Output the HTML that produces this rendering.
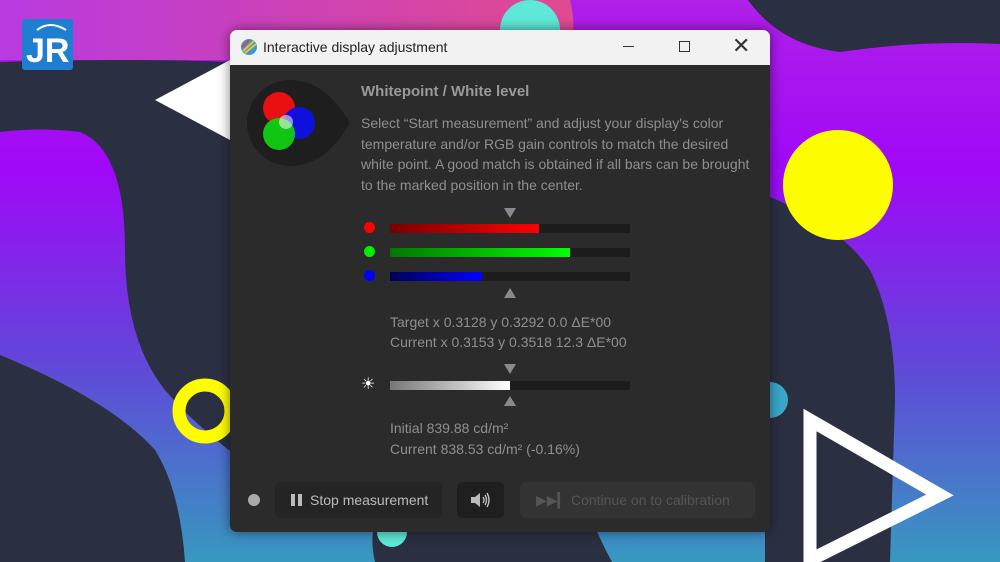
<!DOCTYPE html>
<html><head><meta charset="utf-8"><style>
body{margin:0;width:1000px;height:562px;overflow:hidden;background:#2a2f42;font-family:"Liberation Sans",sans-serif;position:relative}
.win{position:absolute;left:230px;top:30px;width:540px;height:502px;background:#2b2b2b;border-radius:7px;overflow:hidden;box-shadow:0 0 12px rgba(0,0,0,.5)}
.tb{height:35px;background:#f2f2f2;position:relative;font-size:14px;color:#222}
.t{position:absolute;font-size:14px;color:#8f8f8f}
.bar{position:absolute;left:160px;width:240px;height:9px;background:#1c1c1c}
.bar div{height:100%}
.dot{position:absolute;left:134px;width:11px;height:11px;border-radius:50%}
.tri{position:absolute;left:274px;width:0;height:0;border-left:6px solid transparent;border-right:6px solid transparent}
.dn{border-top:10px solid #8a8a8a}.up{border-bottom:10px solid #8a8a8a}
.btn{position:absolute;top:452px;height:36px;border-radius:6px;background:#242424;color:#bcbcbc;font-size:14px;line-height:36px}
</style></head><body>
<svg width="1000" height="562" style="position:absolute;left:0;top:0">
<defs>
<linearGradient id="bg" x1="0" y1="0" x2="0" y2="1"><stop offset="0" stop-color="#b020e8"/><stop offset=".3" stop-color="#a008f8"/><stop offset=".65" stop-color="#6048d8"/><stop offset="1" stop-color="#3898c0"/></linearGradient>
<linearGradient id="g1" x1="0" y1="0" x2="1" y2="0"><stop offset="0" stop-color="#b83ae0"/><stop offset="1" stop-color="#e04a90"/></linearGradient>
</defs>
<rect width="1000" height="562" fill="url(#bg)"/>
<path d="M0 0H570Q580 40 560 60H0Z" fill="url(#g1)"/>
<path d="M0 62Q120 58 235 62L235 455Q190 420 165 390Q125 340 125 250Q125 150 80 132Q40 127 0 132Z" fill="#2a2f42"/>
<path d="M0 355Q110 400 155 450Q180 490 185 562L0 562Z" fill="#2a2f42"/>
<path d="M748 0Q780 45 840 52Q920 40 1000 44L1000 0Z" fill="#2a2f42"/>
<path d="M765 195Q840 225 870 270Q895 320 895 400L890 562L765 562Z" fill="#2a2f42"/>
<path d="M375 562Q368 530 380 515L590 515Q600 540 612 562Z" fill="#2a2f42"/>
<circle cx="838" cy="185" r="55" fill="#fdfd00"/>
<circle cx="205" cy="411" r="26" fill="none" stroke="#fdfd00" stroke-width="13"/>
<circle cx="530" cy="30" r="30" fill="#5fe8d8"/>
<circle cx="392" cy="532" r="15" fill="#5fe8d8"/>
<circle cx="770" cy="400" r="18" fill="#3aa8c8"/>
<path d="M155 100L230 60V140Z" fill="#fff"/>
<path d="M810 420L940 495L810 560Z" fill="none" stroke="#fff" stroke-width="13"/>
<rect x="22" y="19" width="51" height="51" rx="3" fill="#1e7fd0"/>
<text x="26" y="62" font-family="Liberation Sans" font-weight="bold" font-size="34" fill="#fff">JR</text>
<path d="M37 30Q50 20 66 30" fill="none" stroke="#fff" stroke-width="2"/>
</svg>
<div class="win">
<div class="tb">
<svg width="18" height="18" style="position:absolute;left:10px;top:8px"><circle cx="9" cy="9" r="8" fill="#3a9ad0"/><path d="M3 13L14 3M5 15L16 6" stroke="#f0c030" stroke-width="2"/><path d="M2 9L9 2" stroke="#e04040" stroke-width="2"/></svg>
<span style="position:absolute;left:33px;top:9px">Interactive display adjustment</span>
<span style="position:absolute;left:393px;top:16px;width:11px;height:1px;background:#333"></span>
<span style="position:absolute;left:449px;top:11px;width:9px;height:9px;border:1.3px solid #333"></span>
<span style="position:absolute;left:502px;top:3px;font-size:22px;color:#333">✕</span>
</div>
<svg width="120" height="100" style="position:absolute;left:10px;top:45px">
<path d="M50 5Q85 5 110 48Q85 91 50 91A43 43 0 0 1 50 5Z" fill="#1e1e1e"/>
<circle cx="39" cy="33" r="16" fill="#e81010"/><circle cx="59" cy="48" r="16" fill="#1010e8" opacity=".95"/><circle cx="39" cy="59" r="16" fill="#10d010" opacity=".95"/>
<circle cx="46" cy="47" r="7" fill="#fff" opacity=".55"/>
</svg>
<div class="t" style="left:131px;top:53px;font-weight:bold;font-size:15px;color:#9a9a9a">Whitepoint / White level</div>
<div class="t" style="left:131px;top:83px;line-height:20.5px;width:400px">Select “Start measurement” and adjust your display's color temperature and/or RGB gain controls to match the desired white point. A good match is obtained if all bars can be brought to the marked position in the center.</div>
<div class="tri dn" style="top:178px"></div>
<div class="dot" style="top:192px;background:#f00"></div><div class="bar" style="top:194px"><div style="width:149px;background:linear-gradient(90deg,#700,#f00)"></div></div>
<div class="dot" style="top:216px;background:#0e0"></div><div class="bar" style="top:218px"><div style="width:180px;background:linear-gradient(90deg,#070,#0f0)"></div></div>
<div class="dot" style="top:240px;background:#00f"></div><div class="bar" style="top:242px"><div style="width:92px;background:linear-gradient(90deg,#005,#00f)"></div></div>
<div class="tri up" style="top:258px"></div>
<div class="t" style="left:160px;top:282px;line-height:20px">Target x 0.3128 y 0.3292 0.0 ΔE*00<br>Current x 0.3153 y 0.3518 12.3 ΔE*00</div>
<div class="tri dn" style="top:334px"></div>
<div style="position:absolute;left:131px;top:344px;color:#fff;font-size:16px">☀</div>
<div class="bar" style="top:351px"><div style="width:120px;background:linear-gradient(90deg,#777,#fff)"></div></div>
<div class="tri up" style="top:366px"></div>
<div class="t" style="left:160px;top:388px;line-height:21px">Initial 839.88 cd/m²<br>Current 838.53 cd/m² (-0.16%)</div>
<div style="position:absolute;left:18px;top:464px;width:12px;height:12px;border-radius:50%;background:#aaa"></div>
<div class="btn" style="left:45px;width:167px"><span style="position:absolute;left:16px;top:12px;width:4px;height:12px;background:#bbb"></span><span style="position:absolute;left:23px;top:12px;width:4px;height:12px;background:#bbb"></span><span style="position:absolute;left:35px">Stop measurement</span></div>
<div class="btn" style="left:227px;width:47px;background:#1f1f1f">
<svg width="24" height="20" style="position:absolute;left:12px;top:8px"><path d="M2 7H6L11 3V17L6 13H2Z" fill="#bbb"/><path d="M14 7Q16 10 14 13M16 5Q19 10 16 15M18 3Q22 10 18 17" fill="none" stroke="#bbb" stroke-width="1.4"/></svg></div>
<div class="btn" style="left:290px;width:235px;background:#333;color:#555"><span style="position:absolute;left:16px">▶▶▎</span><span style="position:absolute;left:51px">Continue on to calibration</span></div>
</div>
</body></html>
